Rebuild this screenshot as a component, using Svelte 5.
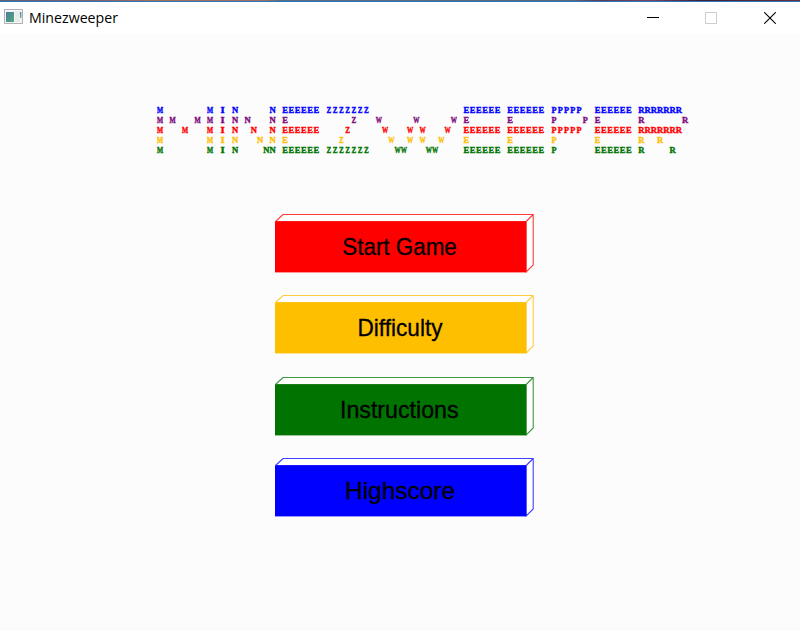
<script>
  // Each entry: letter followed by the columns it occupies.
  const span = (a, b) => Array.from({ length: b - a + 1 }, (_, i) => a + i);
  const bars = { E: [...span(20, 25), ...span(49, 54), ...span(56, 61), ...span(70, 75)] };
  const stems = { E: [20, 49, 56, 70] };
  const rows = [
    { color: '#0000ff', cells: { M: [0, 8], I: [10], N: [12, 18], ...bars, Z: span(27, 33), P: span(63, 67), R: span(77, 83) } },
    { color: '#7d0a7d', cells: { M: [0, 2, 6, 8], I: [10], N: [12, 14, 18], ...stems, Z: [31], W: [35, 41, 47], P: [63, 68], R: [77, 84] } },
    { color: '#ff0000', cells: { M: [0, 4, 8], I: [10], N: [12, 15, 18], ...bars, Z: [30], W: [36, 40, 42, 46], P: span(63, 67), R: span(77, 83) } },
    { color: '#fdbf0a', cells: { M: [0, 8], I: [10], N: [12, 16, 18], ...stems, Z: [29], W: [37, 40, 42, 45], P: [63], R: [77, 80] } },
    { color: '#007300', cells: { M: [0, 8], I: [10], N: [12, 17, 18], ...bars, Z: span(27, 33), W: [38, 39, 43, 44], P: [63], R: [77, 82] } }
  ];
  const widths = { M: 6.2, N: 6.2, W: 6.2, R: 6.2, E: 5.7, Z: 4.8, P: 5, I: 4.2 };
  const glyphs = rows.flatMap((row, r) =>
    Object.entries(row.cells).flatMap(([ch, cols]) =>
      cols.map((c) => ({ ch, w: widths[ch], x: 7 + c * 6.25 + 3.2 - widths[ch] / 2, y: 12.6 + r * 10, color: row.color }))
    )
  );

  const buttons = [
    { label: 'Start Game', color: '#ff0000', edge: '#ff3c3c', x: 67.3, w: 114.5 },
    { label: 'Difficulty', color: '#fdbf00', edge: '#fdcc40', x: 82.5, w: 85 },
    { label: 'Instructions', color: '#007300', edge: '#409640', x: 65, w: 118.5 },
    { label: 'Highscore', color: '#0000ff', edge: '#4040ff', x: 70, w: 110 }
  ];
</script>

<div class="window">
  <div class="backdrop"></div>
  <header>
    <svg class="app" width="19" height="16" viewBox="0 0 19 16">
      <defs>
        <linearGradient id="pane" x1="0" y1="0" x2="1" y2="1">
          <stop offset="0" stop-color="#4a7ca0" />
          <stop offset="1" stop-color="#55a878" />
        </linearGradient>
        <linearGradient id="bar" x1="0" y1="0" x2="0" y2="1">
          <stop offset="0" stop-color="#3c80b4" />
          <stop offset="1" stop-color="#62b488" />
        </linearGradient>
      </defs>
      <rect x=".5" y=".5" width="18" height="14" fill="#f4f4f4" stroke="#b0b3b9" />
      <rect x="2" y="3" width="8" height="10" fill="url(#pane)" />
      <rect x="11" y="2" width="5" height="11" fill="#e9eaec" />
      <rect x="16" y="3" width="1.4" height="6" fill="url(#bar)" />
    </svg>
    <svg class="title" width="100" height="28" viewBox="0 0 100 28">
      <text x="0" y="19" textLength="89" lengthAdjust="spacingAndGlyphs">Minezweeper</text>
    </svg>
    <div class="controls">
      <svg class="minimize" width="12" height="12" viewBox="0 0 12 12"><path d="M0 5.5h12" stroke="#000" /></svg>
      <svg width="12" height="12" viewBox="0 0 12 12"><path d="M.5.5h11v11H.5z" fill="none" stroke="#ccc" /></svg>
      <svg width="12" height="12" viewBox="0 0 12 12"><path d="M.3.3l11.4 11.4M11.7.3L.3 11.7" stroke="#000" stroke-width="1.1" /></svg>
    </div>
  </header>
  <main>
    <svg class="banner" width="544" height="60" viewBox="0 0 544 60">
      {#each glyphs as g}
        <text x={g.x} y={g.y} fill={g.color} stroke={g.color} textLength={g.w} lengthAdjust="spacingAndGlyphs">{g.ch}</text>
      {/each}
    </svg>
    <nav>
      {#each buttons as b}
        <svg class="button" width="260" height="60" viewBox="0 0 260 60">
          <path d="M.5 7.5L8 .5H258.2V51L251.2 58V7.5H.5M251.2 7.5L258.2 .5" fill="#fff" stroke={b.edge} stroke-width="1.1" />
          <rect x="0" y="7.4" width="251.2" height="51" fill={b.color} />
          <text x={b.x} y="41.3" textLength={b.w} lengthAdjust="spacingAndGlyphs">{b.label}</text>
        </svg>
      {/each}
    </nav>
  </main>
</div>

<style>
  :global(body) { margin: 0; }
  .window {
    width: 800px;
    height: 631px;
    display: flex;
    flex-direction: column;
    overflow: hidden;
    background: #fcfcfc;
  }
  .backdrop {
    height: 1px;
    flex: none;
    background: linear-gradient(90deg, #66606e 0, #80606a 90px, #a56e58 150px, #a07060 265px, #5c6c80 280px, #5c6878 570px, #603a50 600px, #7a4660 650px, #402030 700px, #683040 800px);
    background-clip: padding-box;
    border-bottom: 1px solid #2878c0;
  }
  header {
    height: 32px;
    flex: none;
    display: flex;
    align-items: flex-start;
    background: #fff;
  }
  .app { margin: 7px 5px 0 4px; }
  .title { margin: 2px 0 0 1px; }
  .title text {
    font: 15px "Open Sans", "Noto Sans", sans-serif;
    fill: #000;
  }
  .controls {
    display: flex;
    gap: 47px;
    margin: 10px 24px 0 auto;
  }
  .minimize { margin-right: -1px; }
  main {
    flex: 1;
    display: flex;
    flex-direction: column;
  }
  .banner { margin: 66px 0 0 150px; flex: none; }
  .banner text {
    font: bold 9px "Liberation Serif", serif;
    stroke-width: .4px;
  }
  nav {
    display: flex;
    flex-direction: column;
    gap: 21.3px;
    margin: 54px 0 0 275px;
  }
  .button { display: block; flex: none; }
  .button text {
    font: 24px "Liberation Sans", Arial, sans-serif;
    fill: #000;
    stroke: #000;
    stroke-width: .3px;
  }
</style>
